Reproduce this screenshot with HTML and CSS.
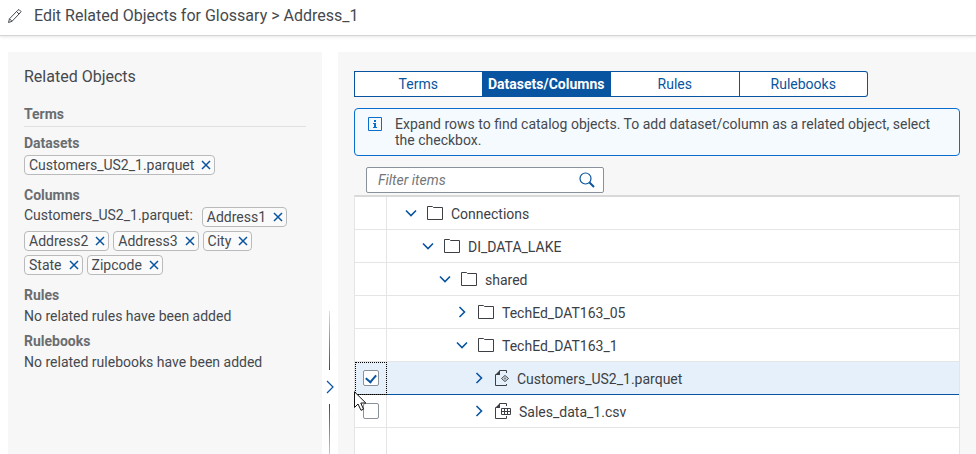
FILE: index.html
```html
<!DOCTYPE html>
<html lang="en">
<head>
<meta charset="utf-8">
<title>Edit Related Objects</title>
<link rel="stylesheet" href="styles.css">
</head>
<body>
<svg class="defs" aria-hidden="true">
  <symbol id="folder" viewBox="0 0 16 16"><path d="M.5 14.500V1.500H5.500L6.500 2.500H15.500V14.500Z" fill="none" stroke="currentColor"/></symbol>
  <symbol id="down" viewBox="0 0 12 12"><path d="M1 3.500L6 8.500L11 3.500" fill="none" stroke="currentColor" stroke-width="1.600"/></symbol>
  <symbol id="right" viewBox="0 0 12 12"><path d="M3.500 1L8.500 6L3.500 11" fill="none" stroke="currentColor" stroke-width="1.600"/></symbol>
  <symbol id="close" viewBox="0 0 10 10"><path d="M1 1L9 9M9 1L1 9" fill="none" stroke="currentColor" stroke-width="1.500"/></symbol>
</svg>

<header class="header">
  <svg class="pencil" viewBox="0 0 16 16"><path d="M2.500 14.500L3.500 10.800L11.500 2.500L13 1.500L15 3.500L14 5L6 13.300ZM10.500 3.500L13 6M3.500 10.800L6 13.300" fill="none" stroke="currentColor"/></svg>
  <h1>Edit Related Objects for Glossary &gt; Address_1</h1>
</header>

<main class="content">
  <section class="panel related">
    <h2>Related Objects</h2>
    <h3 class="ruled">Terms</h3>
    <h3>Datasets</h3>
    <div class="tokens">
      <span class="token">Customers_US2_1.parquet<button aria-label="Remove Customers_US2_1.parquet"><svg><use href="#close"/></svg></button></span>
    </div>
    <h3>Columns</h3>
    <div class="tokens">
      <span class="dataset">Customers_US2_1.parquet:</span>
      <span class="token">Address1<button aria-label="Remove Address1"><svg><use href="#close"/></svg></button></span>
      <span class="token">Address2<button aria-label="Remove Address2"><svg><use href="#close"/></svg></button></span>
      <span class="token">Address3<button aria-label="Remove Address3"><svg><use href="#close"/></svg></button></span>
      <span class="token">City<button aria-label="Remove City"><svg><use href="#close"/></svg></button></span>
      <span class="token">State<button aria-label="Remove State"><svg><use href="#close"/></svg></button></span>
      <span class="token">Zipcode<button aria-label="Remove Zipcode"><svg><use href="#close"/></svg></button></span>
    </div>
    <h3>Rules</h3>
    <p>No related rules have been added</p>
    <h3>Rulebooks</h3>
    <p>No related rulebooks have been added</p>
  </section>

  <div class="splitter">
    <span class="line"></span>
    <button aria-label="Resize panels"><svg viewBox="0 0 8 14"><path d="M1 1L7 7L1 13" fill="none" stroke="currentColor" stroke-width="1.200"/></svg></button>
    <span class="line below"></span>
  </div>

  <section class="panel browser">
    <nav class="tabs">
      <button>Terms</button>
      <button class="active">Datasets/Columns</button>
      <button>Rules</button>
      <button>Rulebooks</button>
    </nav>
    <div class="message">
      <svg viewBox="0 0 14 14"><path d="M.5.500H13.500V13.500H.5Z" fill="none" stroke="currentColor"/><path d="M6 3H8V5H6ZM5 6H8V10H9V11H5V10H6V7H5Z" fill="currentColor"/></svg>
      <p>Expand rows to find catalog objects. To add dataset/column as a related object, select the checkbox.</p>
    </div>
    <div class="filter">
      <input type="text" placeholder="Filter items" aria-label="Filter items">
      <button aria-label="Search"><svg viewBox="0 0 16 16"><circle cx="6.500" cy="6.500" r="5.500" fill="none" stroke="currentColor" stroke-width="1.200"/><path d="M10.500 10.500L15 15" stroke="currentColor" stroke-width="2"/></svg></button>
    </div>
    <table class="tree">
      <tbody>
        <tr><td class="select"></td><td><div class="node"><svg class="arrow"><use href="#down"/></svg><svg class="icon"><use href="#folder"/></svg>Connections</div></td></tr>
        <tr><td class="select"></td><td><div class="node level1"><svg class="arrow"><use href="#down"/></svg><svg class="icon"><use href="#folder"/></svg>DI_DATA_LAKE</div></td></tr>
        <tr><td class="select"></td><td><div class="node level2"><svg class="arrow"><use href="#down"/></svg><svg class="icon"><use href="#folder"/></svg>shared</div></td></tr>
        <tr><td class="select"></td><td><div class="node level3"><svg class="arrow"><use href="#right"/></svg><svg class="icon"><use href="#folder"/></svg>TechEd_DAT163_05</div></td></tr>
        <tr><td class="select"></td><td><div class="node level3"><svg class="arrow"><use href="#down"/></svg><svg class="icon"><use href="#folder"/></svg>TechEd_DAT163_1</div></td></tr>
        <tr class="selected"><td class="select"><input type="checkbox" id="row-customers" checked></td><td><div class="node level4"><svg class="arrow"><use href="#right"/></svg><svg class="icon narrow" viewBox="0 0 14 16"><path d="M4.500.500H11.500V3M.5 4.500V15.500H11.500V14" fill="none" stroke="currentColor"/><path d="M0 5L5 0V5Z" fill="currentColor"/><path d="M6.500 8.500L10 5.500L13.500 8.500L10 11.500Z" fill="none" stroke="currentColor"/><path d="M8.500 8.500L10 7L11.500 8.500L10 10Z" fill="currentColor" opacity=".6"/></svg><label for="row-customers">Customers_US2_1.parquet</label></div></td></tr>
        <tr><td class="select"><input type="checkbox" id="row-sales"></td><td><div class="node level4"><svg class="arrow"><use href="#right"/></svg><svg class="icon" viewBox="0 0 16 16"><path d="M4.500.500H11.500V3M.5 4.500V15.500H11.500V13" fill="none" stroke="currentColor"/><path d="M0 5L5 0V5Z" fill="currentColor"/><path d="M6.500 5.500H15.500V11.500H6.500ZM6.500 8.500H15.500M9.500 5.500V11.500M12.500 5.500V11.500" fill="none" stroke="currentColor"/></svg><label for="row-sales">Sales_data_1.csv</label></div></td></tr>
        <tr><td class="select"></td><td></td></tr>
      </tbody>
    </table>
  </section>
</main>
<svg class="pointer" viewBox="0 0 13 20" aria-hidden="true"><path d="M.5.800V16.500L4 13L7 19.300L9.500 18.200L6.800 12H11.800Z" fill="#fff" stroke="#111"/></svg>
</body>
</html>
```
FILE: styles.css
```css
* { box-sizing: border-box; }
body {
  margin: 0;
  height: 100vh;
  overflow: hidden;
  display: flex;
  flex-direction: column;
  font: 14px/16px Roboto, "Liberation Sans", sans-serif;
  color: #45494e;
  background: #fff;
}
h1, h2, h3, p { margin: 0; }
button { font: inherit; cursor: pointer; }
svg { display: block; flex: none; }
.defs { position: absolute; width: 0; height: 0; }

.header {
  display: flex;
  align-items: center;
  gap: 12px;
  height: 36px;
  flex: none;
  padding: 0 8px 4px 6px;
  border-bottom: 1px solid #d4d4d4;
  box-shadow: 0 1px 3px rgba(0, 0, 0, .1);
}
.header h1 { font-size: 16px; line-height: 20px; font-weight: 400; }
.pencil { width: 16px; height: 16px; }

.content {
  display: flex;
  flex: 1;
  min-height: 0;
  padding: 16px 0 0 8px;
}
.panel { background: #f7f7f7; overflow: hidden; }
.related { flex: 0 0 314px; padding: 16px; }
.related h2 { font-size: 16px; line-height: 18px; font-weight: 400; margin-bottom: 19px; }
.related h3 { font-size: 14px; line-height: 18px; font-weight: 700; color: #6a6d70; }
.related .ruled { padding-bottom: 4px; border-bottom: 1px solid #e0e0e0; margin-bottom: 7px; height: 22px; }
.related p { line-height: 20px; margin: 2px 0 6px; }
.tokens {
  display: flex;
  flex-wrap: wrap;
  gap: 4px;
  padding: 3px 0 11px;
}
.token {
  display: flex;
  align-items: center;
  height: 20px;
  padding-left: 4px;
  border: 1px solid #b8babc;
  border-radius: 4px;
  background: #fafafa;
}
.token button {
  display: flex;
  width: 20px;
  padding: 0 3px 0 7px;
  border: 0;
  background: none;
  color: #0854a0;
}
.token svg { width: 10px; height: 10px; }
.dataset { margin-right: 5px; }

.splitter {
  flex: 0 0 16px;
  display: flex;
  flex-direction: column;
  align-items: center;
  padding-top: 259px;
}
.line { width: 1px; height: 59px; flex: none; margin-right: 2px; background: linear-gradient(to bottom, #d5e2ef, #0854a0); }
.line.below { background: linear-gradient(to top, #d5e2ef, #0854a0); }
.splitter button {
  display: flex;
  align-items: center;
  justify-content: center;
  width: 16px;
  height: 34px;
  flex: none;
  padding: 0;
  border: 0;
  background: none;
  color: #0854a0;
}
.splitter svg { width: 8px; height: 14px; }

.browser { flex: 1; min-width: 0; padding: 19px 16px 0; }
.tabs {
  display: grid;
  grid-template-columns: repeat(4, 1fr);
  width: 514px;
  max-width: 100%;
  height: 26px;
}
.tabs button {
  padding: 0;
  border: 1px solid #0854a0;
  border-left-width: 0;
  background: #fff;
  color: #0854a0;
}
.tabs button:first-child { border-left-width: 1px; }
.tabs button:last-child { border-radius: 0 3px 3px 0; }
.tabs .active { background: #0854a0; color: #fff; font-weight: 700; }

.message {
  display: flex;
  gap: 13px;
  margin: 11px 0;
  padding: 7px 16px 7px 13px;
  border: 1px solid #0a6ed1;
  border-radius: 4px;
  background: #f5faff;
}
.message svg { width: 14px; height: 14px; margin-top: 1px; color: #0a6ed1; }

.filter {
  display: flex;
  align-items: center;
  width: 238px;
  height: 26px;
  margin-left: 12px;
  border: 1px solid #89919a;
  border-radius: 2px;
  background: #fff;
}
.filter input {
  flex: 1;
  min-width: 0;
  height: 24px;
  padding: 0 0 0 11px;
  border: 0;
  outline: 0;
  background: none;
  font: inherit;
}
.filter input::placeholder { font-style: italic; color: #74777a; opacity: 1; }
.filter button {
  display: flex;
  padding: 0 8px;
  border: 0;
  background: none;
  color: #0854a0;
}
.filter svg { width: 16px; height: 16px; }

.tree {
  width: 100%;
  margin-top: 2px;
  border-collapse: separate;
  border-spacing: 0;
  table-layout: fixed;
  border: 1px solid #e5e5e5;
  border-top: 2px solid #d9d9d9;
  background: #fff;
}
.tree td { height: 33px; padding: 0; border-bottom: 1px solid #e5e5e5; }
.tree .select { width: 32px; border-right: 1px solid #e5e5e5; }
.tree .selected td { background: #e5f0fa; border-bottom-color: #0854a0; }
.tree .selected .select { outline: 1px dotted #000; outline-offset: -1px; }
.select input {
  appearance: none;
  display: flex;
  align-items: center;
  justify-content: center;
  width: 16px;
  height: 16px;
  margin: 0 8px;
  border: 1px solid #89919a;
  border-radius: 2px;
  background: #fff;
}
.select input:checked::before {
  content: "";
  width: 8px;
  height: 5px;
  border: solid #0854a0;
  border-width: 0 0 2px 2px;
  transform: translateY(-1px) rotate(-50deg);
}
.node { display: flex; align-items: center; gap: 8px; padding: 2px 0 0 18px; color: #3c4045; }
.node .arrow, .node .icon { margin-bottom: 2px; }
.level1 { padding-left: 35px; }
.level2 { padding-left: 52px; }
.level3 { padding-left: 69px; }
.level4 { padding-left: 86px; }
.arrow { width: 12px; height: 12px; margin-right: 2px; color: #0854a0; }
.icon { width: 16px; height: 16px; }
.narrow { width: 14px; }
.pointer { position: absolute; left: 354px; top: 391px; width: 13px; height: 20px; }
```
